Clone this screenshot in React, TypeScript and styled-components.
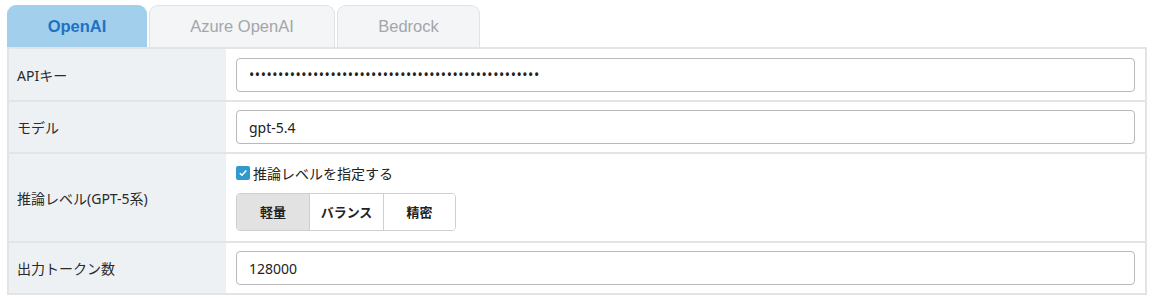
import React, { useState } from "react";
import styled, { createGlobalStyle, css } from "styled-components";

const GlobalStyle = createGlobalStyle`
    html, body {
        margin: 0;
        padding: 0;
        background: #ffffff;
    }
    body {
        font-family: "Noto Sans", "Noto Sans CJK JP", sans-serif;
        color: #222;
    }
`;

const Page = styled.div`
    padding: 5px 5px 0 7px;
    width: 1140px;
`;

const TabBar = styled.div`
    display: flex;
    gap: 2px;
    height: 42px;
`;

const Tab = styled.button<{ $active?: boolean; $width: number }>`
    width: ${p => p.$width}px;
    height: 42px;
    border: 1px solid #dfe3e7;
    border-bottom: none;
    border-radius: 9px 9px 0 0;
    background: #f3f5f7;
    color: #a3a6a9;
    font-family: "Liberation Sans", Arial, sans-serif;
    font-size: 16.5px;
    padding: 0;
    cursor: pointer;
    ${p => p.$active && css`
        background: #a2d0ec;
        border-color: #a2d0ec;
        color: #1f72c3;
        font-weight: bold;
    `}
`;

const Table = styled.div`
    border: 2px solid #e4e4e4;
    border-top: none;
    width: 1140px;
    box-sizing: border-box;
`;

const Row = styled.div<{ $height: number }>`
    display: grid;
    grid-template-columns: 217px 1fr;
    min-height: ${p => p.$height}px;
    border-top: 2px solid #e4e4e4;
`;

const Label = styled.div`
    background: #edf1f4;
    display: flex;
    align-items: center;
    padding-left: 8px;
    font-size: 14px;
    color: #2a2a2a;
`;

const Cell = styled.div`
    display: flex;
    flex-direction: column;
    justify-content: center;
    padding: 0 10px 0 10px;
`;

const TextInput = styled.input<{ $spaced?: boolean }>`
    height: 34px;
    box-sizing: border-box;
    border: 1px solid #b9b9b9;
    border-radius: 4px;
    padding: 0 12px;
    font-family: "Noto Sans", "Noto Sans CJK JP", sans-serif;
    font-size: 14px;
    color: #222;
    outline: none;
    width: 100%;
    letter-spacing: ${p => (p.$spaced ? "0.55px" : "normal")};
`;

const CheckRow = styled.label`
    display: flex;
    align-items: center;
    gap: 3px;
    font-size: 14px;
    color: #222;
    margin-top: 6px;
    cursor: pointer;
`;

const CheckBox = styled.span<{ $checked: boolean }>`
    width: 14px;
    height: 14px;
    border-radius: 2px;
    background: ${p => (p.$checked ? "#2f9acb" : "#fff")};
    border: ${p => (p.$checked ? "none" : "1px solid #888")};
    display: flex;
    align-items: center;
    justify-content: center;
    box-sizing: border-box;
`;

const Segments = styled.div`
    display: flex;
    margin-top: 10px;
    margin-bottom: 8px;
    width: max-content;
    border: 1px solid #cfcfcf;
    border-radius: 4px;
    overflow: hidden;
`;

const Segment = styled.button<{ $active?: boolean; $width: number }>`
    width: ${p => p.$width}px;
    height: 36px;
    border: none;
    border-left: 1px solid #cfcfcf;
    background: ${p => (p.$active ? "#e2e2e2" : "#fff")};
    font-family: "Noto Sans", "Noto Sans CJK JP", sans-serif;
    font-size: 13px;
    font-weight: bold;
    color: #222;
    padding: 0;
    cursor: pointer;
    &:first-child {
        border-left: none;
    }
`;

const tabs = [
    { name: "OpenAI", width: 140 },
    { name: "Azure OpenAI", width: 186 },
    { name: "Bedrock", width: 143 },
];

const levels = [
    { name: "軽量", width: 72 },
    { name: "バランス", width: 74 },
    { name: "精密", width: 72 },
];

const App = () => {
    const [tab, setTab] = useState("OpenAI");
    const [useLevel, setUseLevel] = useState(true);
    const [level, setLevel] = useState("軽量");

    return (
        <Page>
            <GlobalStyle />
            <TabBar>
                {tabs.map(t => (
                    <Tab key={t.name} $width={t.width} $active={tab === t.name} onClick={() => setTab(t.name)}>
                        {t.name}
                    </Tab>
                ))}
            </TabBar>
            <Table>
                <Row $height={51}>
                    <Label>APIキー</Label>
                    <Cell>
                        <TextInput type="password" $spaced defaultValue={"x".repeat(50)} />
                    </Cell>
                </Row>
                <Row $height={50}>
                    <Label>モデル</Label>
                    <Cell>
                        <TextInput defaultValue="gpt-5.4" />
                    </Cell>
                </Row>
                <Row $height={87}>
                    <Label>推論レベル(GPT-5系)</Label>
                    <Cell>
                        <CheckRow onClick={() => setUseLevel(!useLevel)}>
                            <CheckBox $checked={useLevel}>
                                {useLevel && (
                                    <svg width="10" height="10" viewBox="0 0 10 10">
                                        <path d="M1.8 5.2 L4 7.3 L8.3 2.6" stroke="#fff" strokeWidth="1.5" fill="none" />
                                    </svg>
                                )}
                            </CheckBox>
                            推論レベルを指定する
                        </CheckRow>
                        <Segments>
                            {levels.map(l => (
                                <Segment key={l.name} $width={l.width} $active={level === l.name} onClick={() => setLevel(l.name)}>
                                    {l.name}
                                </Segment>
                            ))}
                        </Segments>
                    </Cell>
                </Row>
                <Row $height={50}>
                    <Label>出力トークン数</Label>
                    <Cell>
                        <TextInput defaultValue="128000" />
                    </Cell>
                </Row>
            </Table>
        </Page>
    );
};

export default App;
